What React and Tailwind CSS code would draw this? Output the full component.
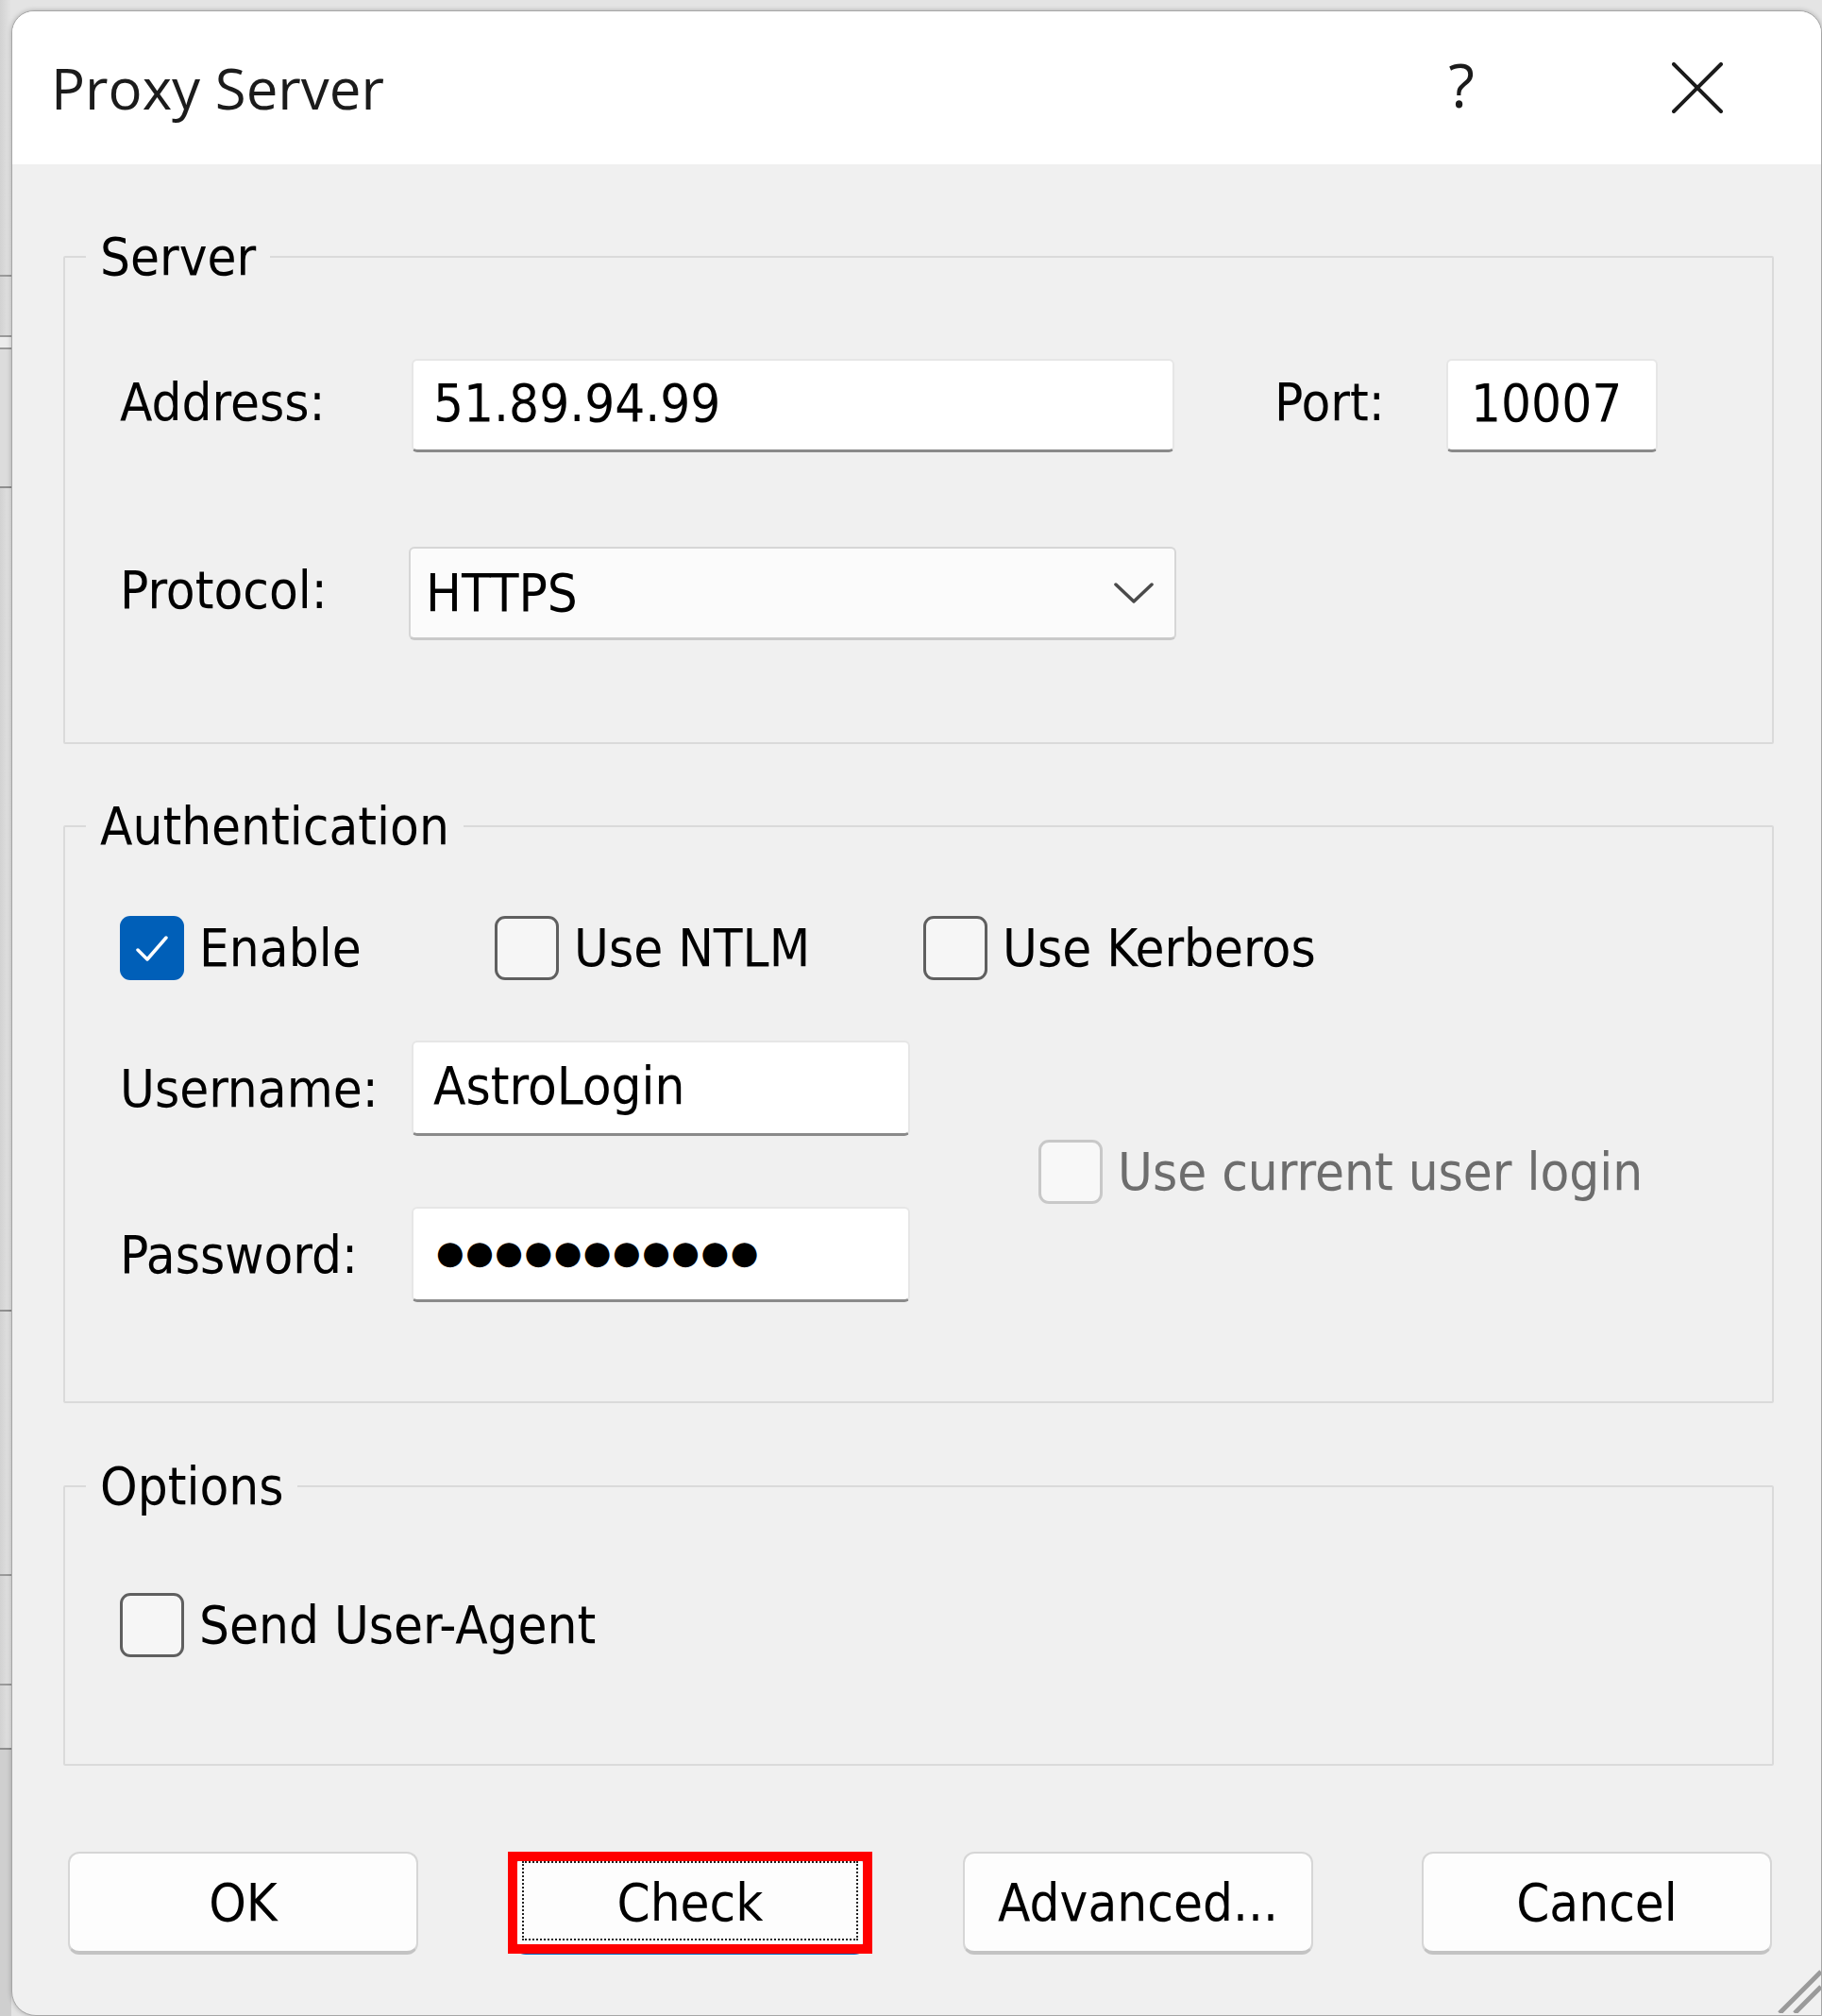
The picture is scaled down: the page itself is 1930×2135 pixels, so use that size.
const uiFont = "font-['DejaVu_Sans_Condensed','Liberation_Sans',sans-serif]";

function Box({ checked, disabled }) {
  if (checked) {
    return (
      <span className="flex h-[68px] w-[68px] shrink-0 items-center justify-center rounded-[11px] bg-[#005fb8]">
        <svg width="68" height="68" viewBox="0 0 68 68" fill="none">
          <path d="M19 36 L29 46 L49 23" stroke="#ffffff" strokeWidth="3.5" strokeLinecap="round" strokeLinejoin="round" />
        </svg>
      </span>
    );
  }
  if (disabled) {
    return <span className="h-[68px] w-[68px] shrink-0 rounded-[11px] border-[3px] border-[#c8c8c8] bg-[#f8f8f8]" />;
  }
  return <span className="h-[68px] w-[68px] shrink-0 rounded-[11px] border-[3px] border-[#5f5f5f] bg-[#f6f6f6]" />;
}

function CheckOption({ label, checked, disabled, className = '' }) {
  return (
    <div className={`flex items-center gap-[16px] ${className}`}>
      <Box checked={checked} disabled={disabled} />
      <span className={disabled ? 'text-[#6d6d6d]' : 'text-black'}>{label}</span>
    </div>
  );
}

function TextBox({ value, className = '' }) {
  return (
    <div className={`flex h-full items-center rounded-[6px] border-2 border-[#e6e6e6] border-b-[3px] border-b-[#8a8a8a] bg-white pl-[21px] pb-[4px] text-black ${className}`}>
      {value}
    </div>
  );
}

function Group({ title, children, className = '' }) {
  return (
    <fieldset className={`w-[1812px] rounded-[2px] border-2 border-[#dadada] ${className}`}>
      <legend className="ml-[22px] px-[15px] leading-[64px] text-black">{title}</legend>
      {children}
    </fieldset>
  );
}

function Button({ label, focused, className = '' }) {
  if (focused) {
    return (
      <div className={`relative flex h-[109px] w-[372px] items-center justify-center rounded-[12px] border-[3px] border-[#0067c0] border-b-[5px] bg-[#fdfdfd] ${className}`}>
        <div className="absolute inset-x-[5px] top-[7px] bottom-[10px] border-2 border-dotted border-[#222]" />
        <span className="text-black">{label}</span>
        {/* red annotation frame */}
        <div className="absolute -left-[10px] -right-[10px] -top-[3px] -bottom-[4px] border-[10px] border-[#ff0000]" />
      </div>
    );
  }
  return (
    <div className={`flex h-[109px] w-[371px] items-center justify-center rounded-[12px] border-2 border-[#d6d6d6] border-b-[4px] border-b-[#c3c3c3] bg-[#fdfdfd] text-black ${className}`}>
      {label}
    </div>
  );
}

function LeftStrip() {
  return (
    <div className="flex h-full w-[12px] shrink-0 flex-col bg-gradient-to-r from-[#d2d2d2] to-[#e4e4e4]">
      <div className="h-[293px] border-b-2 border-[#9a9a9a]" />
      <div className="h-[64px] border-b-2 border-[#9a9a9a]" />
      <div className="h-[13px] border-b-2 border-[#9a9a9a] bg-[#ececec]" />
      <div className="h-[147px] border-b-2 border-[#8f8f8f] bg-[#dcdcdc]" />
      <div className="h-[872px] border-b-2 border-[#8f8f8f]" />
      <div className="h-[280px] border-b-2 border-[#9a9a9a]" />
      <div className="h-[116px] border-b-2 border-[#9a9a9a]" />
      <div className="h-[68px] border-b-2 border-[#8f8f8f]" />
      <div className="flex-1 bg-[#cfcfcf]" />
    </div>
  );
}

export default function App() {
  return (
    <div className={`flex h-[2135px] w-[1930px] overflow-hidden bg-[#e4e4e4] text-[56px] leading-none ${uiFont}`}>
      <LeftStrip />
      <div className="flex flex-1 flex-col pt-[11px]">
        <div className="relative flex h-[2128px] flex-col overflow-hidden rounded-t-[24px] rounded-bl-[26px] border border-[#a6a6a6] bg-[#f0f0f0] shadow-[0_0_5px_rgba(0,0,0,0.25)]">
          {/* title bar */}
          <div className="flex h-[162px] shrink-0 items-center bg-white pl-[41px] pr-[104px]">
            <span className="flex-1 font-['Open_Sans',sans-serif] text-[60px] text-[#1b1b1b]">Proxy Server</span>
            <span className="mb-[6px] w-[30px] text-center font-['Open_Sans',sans-serif] text-[64px] text-[#1b1b1b]">?</span>
            <svg className="ml-[208px]" width="54" height="54" viewBox="0 0 54 54" fill="none">
              <path d="M2 2 L52 52 M52 2 L2 52" stroke="#1b1b1b" strokeWidth="4" strokeLinecap="round" />
            </svg>
          </div>

          {/* body */}
          <div className="flex flex-col pl-[54px]">
            <Group title="Server" className="mt-[66px]">
              <div className="pl-[58px] pt-[76px] pb-[108px]">
                <div className="flex h-[99px] items-center">
                  <span className="mb-[8px] w-[309px] text-black">Address:</span>
                  <TextBox value="51.89.94.99" className="w-[808px]" />
                  <span className="mb-[8px] ml-[106px] w-[182px] text-black">Port:</span>
                  <TextBox value="10007" className="w-[224px] pl-[24px]" />
                </div>
                <div className="mt-[100px] flex h-[99px] items-center">
                  <span className="mb-[8px] w-[306px] text-black">Protocol:</span>
                  <div className="flex h-full w-[813px] items-center justify-between rounded-[6px] border-2 border-[#d6d6d6] border-b-[3px] border-b-[#c9c9c9] bg-[#fbfbfb] pl-[16px] pr-[22px] text-black">
                    <span>HTTPS</span>
                    <svg width="42" height="24" viewBox="0 0 42 24" fill="none">
                      <path d="M2 3 L21 21 L40 3" stroke="#4a4a4a" strokeWidth="3.5" strokeLinecap="round" strokeLinejoin="round" />
                    </svg>
                  </div>
                </div>
              </div>
            </Group>

            <Group title="Authentication" className="mt-[55px]">
              <div className="pl-[58px] pt-[62px] pb-[105px]">
                <div className="flex h-[69px] items-center">
                  <CheckOption label="Enable" checked className="w-[397px]" />
                  <CheckOption label="Use NTLM" className="w-[454px]" />
                  <CheckOption label="Use Kerberos" />
                </div>
                <div className="mt-[64px] flex items-center">
                  <div className="flex flex-col">
                    <div className="flex h-[101px] items-center">
                      <span className="w-[309px] text-black">Username:</span>
                      <TextBox value="AstroLogin" className="w-[528px]" />
                    </div>
                    <div className="mt-[75px] flex h-[101px] items-center">
                      <span className="w-[309px] text-black">Password:</span>
                      <TextBox value="●●●●●●●●●●●" className="w-[528px] pb-0 pl-[24px] font-['DejaVu_Sans',sans-serif] text-[34px] tracking-[1.5px]" />
                    </div>
                  </div>
                  <CheckOption label="Use current user login" disabled className="ml-[136px]" />
                </div>
              </div>
            </Group>

            <Group title="Options" className="mt-[56px]">
              <div className="pl-[58px] pt-[81px] pb-[113px]">
                <CheckOption label="Send User-Agent" className="h-[68px]" />
              </div>
            </Group>

            <div className="mt-[91px] flex items-center pl-[5px]">
              <Button label="OK" />
              <Button label="Check" focused className="ml-[102px]" />
              <Button label="Advanced..." className="ml-[103px]" />
              <Button label="Cancel" className="ml-[115px]" />
            </div>
          </div>

          {/* resize grip */}
          <svg className="absolute bottom-[2px] right-0" width="52" height="52" viewBox="0 0 52 52" fill="none">
            <path d="M8 52 L52 8 M24 52 L52 24" stroke="#9a9a9a" strokeWidth="5" />
          </svg>
        </div>
      </div>
    </div>
  );
}
